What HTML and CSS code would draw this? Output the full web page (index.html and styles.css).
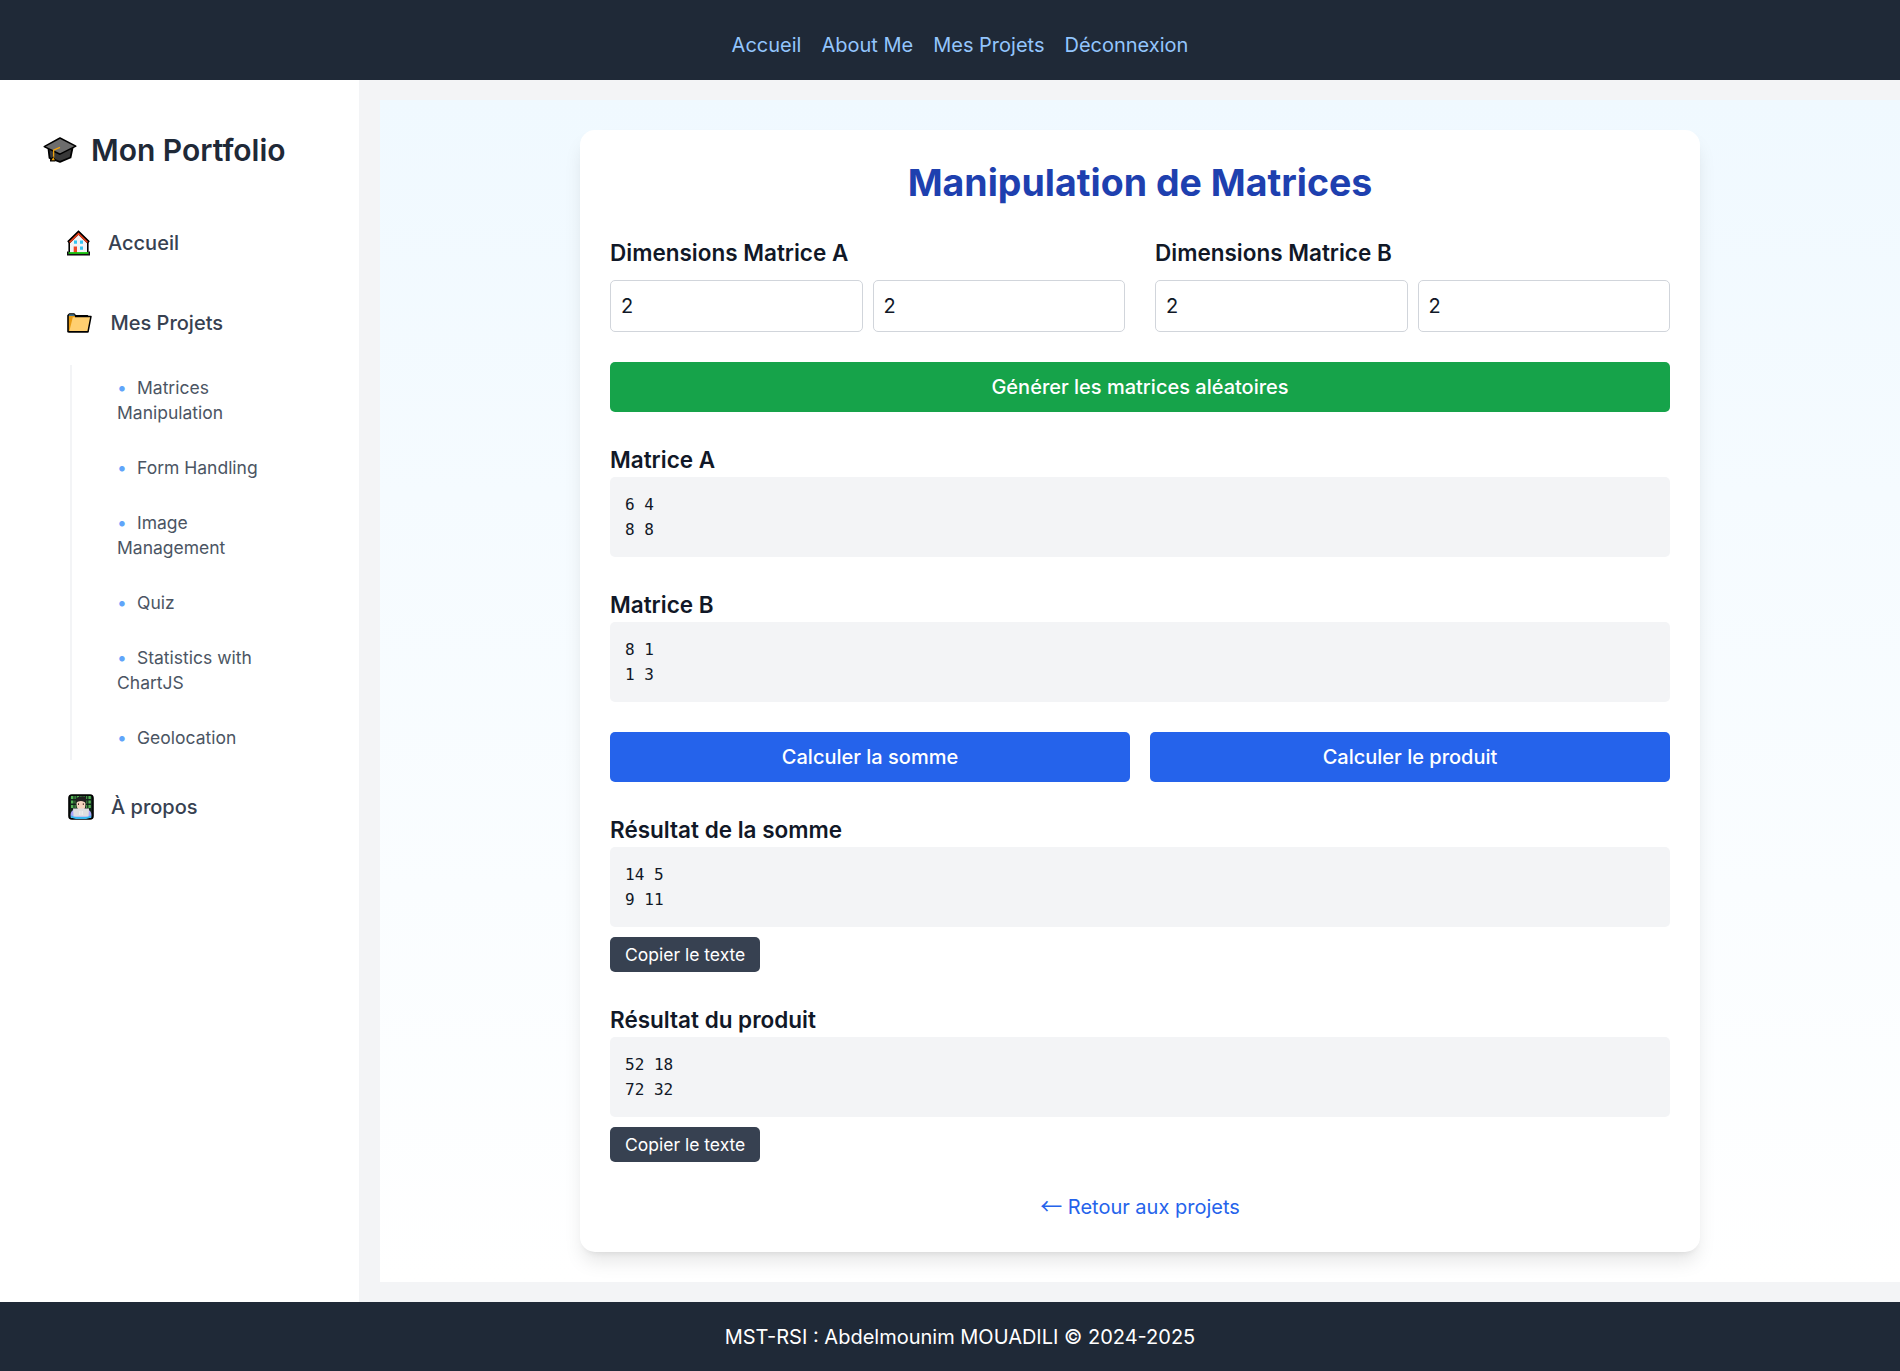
FILE: index.html
```html
<!DOCTYPE html>
<html lang="fr">
<head>
<meta charset="utf-8">
<title>Manipulation de Matrices</title>
<link rel="stylesheet" href="styles.css">
</head>
<body>
<header class="topbar">
  <nav class="topnav">
    <a href="#">Accueil</a>
    <a href="#">About Me</a>
    <a href="#">Mes Projets</a>
    <a href="#">Déconnexion</a>
  </nav>
</header>

<div class="layout">
  <aside class="sidebar">
    <h2 class="brand">
      <svg class="icon-cap" viewBox="0 0 34 26" width="34" height="26">
        <path d="M5.500 12L6.500 21L17 24.800L27.500 20.500L29.500 11Z" fill="#383838" stroke="#000" stroke-width="1.800" stroke-linejoin="round"/>
        <path d="M1.200 9.600L17 1L32.800 9.200L17 17.200Z" fill="#6d6d6d" stroke="#000" stroke-width="1.500" stroke-linejoin="round"/>
        <path d="M17 10.300L10.600 13.200V21" fill="none" stroke="#f2a30b" stroke-width="1.300"/>
        <path d="M7 24.500V22.500L10.300 19.500L12.300 22V24.500Z" fill="#000"/>
        <path d="M8.400 23.300L10.400 20L11.800 23.300Z" fill="#f2a30b"/>
      </svg>
      <span>Mon Portfolio</span>
    </h2>
    <a class="item" href="#">
      <svg class="icon" viewBox="0 0 23 26" width="23" height="26">
        <path d="M2.200 11V24H20.800V11L11.500 2Z" fill="#f3f3f5" stroke="#000" stroke-width="1.600"/>
        <path d="M1.300 12.500L11.500 2.500L21.700 12.500" fill="none" stroke="#000" stroke-width="3.200"/>
        <path d="M2.600 12.300L11.500 3.700L20.400 12.300" fill="none" stroke="#e8401c" stroke-width="1.700"/>
        <path d="M7 10.500h3v3.300H7zM13 10.500h3v3.300h-3zM13 16.500h3v3.300h-3z" fill="#35c5f4"/>
        <path d="M6.700 16.500H10V23.500H6.700Z" fill="#ef4427"/>
        <path d="M1.500 23H21.500" stroke="#16c60c" stroke-width="1.800"/>
        <path d="M.7 21.500V24.800H22.300V21.500" fill="none" stroke="#000" stroke-width="1.300"/>
      </svg>
      <span>Accueil</span>
    </a>
    <a class="item item-projects" href="#">
      <svg class="icon" viewBox="0 0 25 20" width="25" height="20">
        <path d="M1 18.800V2.500L2.500 1H7L8.500 2.700H20.500V18.800Z" fill="#e79a12" stroke="#000" stroke-width="1.600" stroke-linejoin="round"/>
        <path d="M2 2.200H7.500" stroke="#3a7195" stroke-width="1.600"/>
        <path d="M5.800 4.200L24 3.500L21 18.800H2.200Z" fill="#ffcf70"/>
        <path d="M8 3.600L24 3.400L21 18.800H1.500" fill="none" stroke="#000" stroke-width="1.500" stroke-linejoin="round"/>
      </svg>
      <span>Mes Projets</span>
    </a>
    <ul class="sub">
      <li><a href="#"><span class="dot">•</span>Matrices Manipulation</a></li>
      <li><a href="#"><span class="dot">•</span>Form Handling</a></li>
      <li><a href="#"><span class="dot">•</span>Image Management</a></li>
      <li><a href="#"><span class="dot">•</span>Quiz</a></li>
      <li><a href="#"><span class="dot">•</span>Statistics with ChartJS</a></li>
      <li><a href="#"><span class="dot">•</span>Geolocation</a></li>
    </ul>
    <a class="item item-about" href="#">
      <svg class="icon" viewBox="0 0 26 26" width="26" height="26">
        <rect x="1" y="1" width="24" height="24" rx="3" fill="#11251a" stroke="#000" stroke-width="1.600"/>
        <path d="M3 3.500H23M3 8H23M3 12.500H23" stroke="#55b454" stroke-width="2.800" stroke-dasharray="2.400 1.200 1 1.200"/>
        <path d="M3 24C1.500 18 4 15.500 9 15.500H17C22 15.500 24.500 18 23 24Z" fill="#a9a5fb"/>
        <path d="M3 22.500L8 24H18L23 22.500" fill="none" stroke="#37b9f1" stroke-width="2"/>
        <path d="M8.500 9C8.500 6 17.500 6 17.500 9C17.500 16 15 16.500 13 16.500S8.500 15 8.500 9Z" fill="#f6d5c0"/>
        <path d="M7.800 9.500C6.500 4 10 2 13.500 3C15 1.500 19 2 18 5C19 7 18.300 8.500 18 9.500C16.500 6.500 10 6 7.800 9.500Z" fill="#202020"/>
        <path d="M10.500 9.300V11M15.300 9.300V11" stroke="#4a2c20" stroke-width="1"/>
        <path d="M5 14.500H21L20.500 22.500H5.500Z" fill="#dedee0"/>
        <path d="M11 18H15M11 20H15" stroke="#f8f8f8" stroke-width="1.200" stroke-dasharray="1.500 1"/>
      </svg>
      <span>À propos</span>
    </a>
  </aside>

  <main class="content">
    <section class="card">
      <h1>Manipulation de Matrices</h1>
      <div class="dims">
        <div>
          <h2 class="label">Dimensions Matrice A</h2>
          <div class="pair"><input type="text" value="2"><input type="text" value="2"></div>
        </div>
        <div>
          <h2 class="label">Dimensions Matrice B</h2>
          <div class="pair"><input type="text" value="2"><input type="text" value="2"></div>
        </div>
      </div>
      <button class="btn btn-green">Générer les matrices aléatoires</button>
      <div>
        <h2>Matrice A</h2>
        <pre>6 4
8 8</pre>
      </div>
      <div>
        <h2>Matrice B</h2>
        <pre>8 1
1 3</pre>
      </div>
      <div class="actions">
        <button class="btn btn-blue">Calculer la somme</button>
        <button class="btn btn-blue">Calculer le produit</button>
      </div>
      <div>
        <h2>Résultat de la somme</h2>
        <pre>14 5
9 11</pre>
        <button class="copy">Copier le texte</button>
      </div>
      <div>
        <h2>Résultat du produit</h2>
        <pre>52 18
72 32</pre>
        <button class="copy">Copier le texte</button>
      </div>
      <a class="back" href="#"><span class="arrow">←</span> Retour aux projets</a>
    </section>
  </main>
</div>

<footer class="footer">MST-RSI : Abdelmounim MOUADILI © 2024-2025</footer>
</body>
</html>
```
FILE: styles.css
```css
* {
  box-sizing: border-box;
  margin: 0;
  padding: 0;
}

body {
  display: flex;
  flex-direction: column;
  background: #f3f4f6;
  color: #111827;
  font: 20px/30px Inter, "Liberation Sans", sans-serif;
}

a {
  color: inherit;
  text-decoration: none;
}

h2 {
  font-size: 22.5px;
  line-height: 35px;
  font-weight: 600;
}

button {
  display: block;
  border: 0;
  border-radius: 5px;
  color: #fff;
  font-family: inherit;
}

.topbar {
  flex: none;
  height: 80px;
  padding: 30px 0 20px 20px;
  background: #1f2937;
  color: #93c5fd;
}

.topnav {
  display: flex;
  justify-content: center;
  gap: 20px;
}

.layout {
  display: flex;
  flex: none;
  height: 1222px;
}

.sidebar {
  flex: none;
  width: 359px;
  padding: 50px 79px 0 43px;
  background: #fff;
  color: #374151;
}

.brand {
  display: flex;
  align-items: center;
  gap: 14px;
  height: 40px;
  margin-bottom: 58px;
  color: #1f2937;
  font-size: 30px;
  white-space: nowrap;
}

.icon-cap {
  flex: none;
}

.item {
  display: flex;
  align-items: center;
  gap: 18px;
  height: 30px;
  padding-left: 24px;
  font-weight: 500;
}

.item-projects {
  gap: 18.5px;
  margin-top: 50px;
}

.item-about {
  gap: 17.5px;
  padding-left: 24.5px;
  margin-top: 32px;
}

.sub {
  display: flex;
  flex-direction: column;
  gap: 10px;
  margin: 27px 0 0 27px;
  padding-left: 45px;
  border-left: 2px solid #f3f4f6;
  list-style: none;
  color: #4b5563;
  font-size: 17.5px;
  line-height: 25px;
}

.sub a {
  display: block;
  padding: 10px 0;
}

.dot {
  display: inline-block;
  width: 20px;
  color: #60a5fa;
}

.content {
  flex: 1;
  min-width: 0;
  margin: 20px 0 20px 21px;
  padding: 30px 0;
  background: linear-gradient(to bottom, #f0f9ff, #fff);
}

.card {
  display: flex;
  flex-direction: column;
  gap: 30px;
  width: 1120px;
  margin: 0 auto;
  padding: 30px;
  border-radius: 15px;
  background: #fff;
  box-shadow: 0 12.5px 18.75px -3.75px rgba(0, 0, 0, 0.1), 0 5px 7.5px -5px rgba(0, 0, 0, 0.1);
}

.card h1 {
  color: #1e40af;
  font-size: 37.5px;
  line-height: 45px;
  font-weight: 700;
  text-align: center;
}

.dims {
  display: grid;
  grid-template-columns: repeat(2, minmax(0, 1fr));
  gap: 30px;
}

.label {
  margin-bottom: 10px;
}

.pair {
  display: flex;
  gap: 10px;
}

.pair input {
  flex: 1;
  min-width: 0;
  height: 52px;
  padding: 10px;
  border: 1px solid #d1d5db;
  border-radius: 5px;
  color: inherit;
  font: inherit;
}

.btn {
  width: 100%;
  height: 50px;
  font-size: 20px;
  line-height: 30px;
  font-weight: 500;
}

.btn-green {
  background: #16a34a;
}

.btn-blue {
  background: #2563eb;
}

.actions {
  display: flex;
  gap: 20px;
}

pre {
  padding: 15px;
  border-radius: 5px;
  background: #f3f4f6;
  font: 16px/25px "DejaVu Sans Mono", monospace;
}

.copy {
  height: 35px;
  margin-top: 10px;
  padding: 5px 15px;
  background: #374151;
  font-size: 17.5px;
  line-height: 25px;
}

.back {
  height: 30px;
  color: #2563eb;
  text-align: center;
}

.arrow {
  font-family: "Noto Sans CJK JP", sans-serif;
  font-size: 22px;
  line-height: 1;
}

.footer {
  flex: none;
  height: 69px;
  padding: 20px 0 19px 20px;
  background: #1f2937;
  color: #fff;
  text-align: center;
}
```
